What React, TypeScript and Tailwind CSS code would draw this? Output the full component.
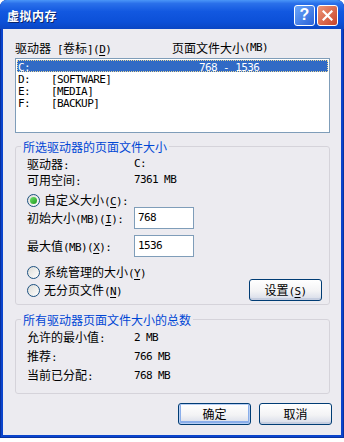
import React from "react";

function T({ s }: { s: string }) {
  const parts = s.match(/[\x00-\x7f]+|[^\x00-\x7f]+/g) ?? [];
  return (
    <>
      {parts.map((p, i) =>
        /^[\x00-\x7f]+$/.test(p) ? (
          <span key={i} className="font-['DejaVu_Sans_Mono',monospace] text-[11px] tracking-[-0.6px] whitespace-pre">
            {p}
          </span>
        ) : (
          <span key={i} className="font-['Noto_Sans_CJK_SC',sans-serif] text-[12px]">
            {p}
          </span>
        )
      )}
    </>
  );
}

function M({ pre, u, post }: { pre: string; u: string; post: string }) {
  return (
    <span className="whitespace-pre">
      <T s={pre} />
      <span className="underline underline-offset-2">
        <T s={u} />
      </span>
      <T s={post} />
    </span>
  );
}

function Radio({ checked }: { checked?: boolean }) {
  return (
    <span className="w-[13px] h-[13px] shrink-0 rounded-full border border-[#1C5180] bg-[linear-gradient(135deg,#DCDCD7,#FFFFFF)] flex items-center justify-center">
      {checked && (
        <span className="w-[7px] h-[7px] rounded-full bg-[linear-gradient(135deg,#6FE06B,#1E9A1E)]" />
      )}
    </span>
  );
}

function Btn({ children, def }: { children: React.ReactNode; def?: boolean }) {
  return (
    <div
      className={
        def
          ? "w-[73px] h-[22px] rounded-[3px] border border-[#003C74] bg-[linear-gradient(to_bottom,#FFFFFF_0%,#F3F3F5_55%,#D6DBE8_100%)] shadow-[inset_0_0_0_1px_#B8CFF4,inset_0_-1px_0_2px_#8AAEEA] flex items-center justify-center leading-[12px]"
          : "w-[73px] h-[22px] rounded-[3px] border border-[#003C74] bg-[linear-gradient(to_bottom,#FFFFFF_0%,#F3F3F5_55%,#D6DBE8_100%)] shadow-[inset_0_-2px_0_#C6CEE0] flex items-center justify-center leading-[12px]"
      }
    >
      {children}
    </div>
  );
}

function Field({ value }: { value: string }) {
  return (
    <div className="w-[60px] h-[22px] border border-[#7F9DB9] bg-white flex items-center pl-[3px] pb-[1px]">
      <T s={value} />
    </div>
  );
}

export default function App() {
  return (
    <div className="w-[344px] h-[442px] bg-white leading-[12px] text-black">
      <div className="w-[344px] h-[438px] flex flex-col rounded-t-[7px] overflow-hidden bg-[#0A44CC] shadow-[inset_1px_0_0_#0831A0,inset_-1px_0_0_#0831A0,inset_0_-1px_0_#0831A0]">
        {/* Title bar */}
        <div className="h-[29px] shrink-0 flex items-center justify-between pl-[7px] pr-[6px] bg-[linear-gradient(to_bottom,#4A96F8_0%,#2A70EA_12%,#1258E0_40%,#0C50D8_75%,#0A46C4_100%)]">
          <span className="pt-[2px] text-white font-bold font-['Noto_Sans_CJK_SC',sans-serif] text-[12px] tracking-[0.5px] [text-shadow:1px_1px_0_#0A246A]">
            虚拟内存
          </span>
          <div className="flex gap-[2px] pt-[1px]">
            <div className="w-[21px] h-[21px] rounded-[3px] border border-white bg-[linear-gradient(135deg,#6BA6FA,#2A62D8)] flex items-center justify-center text-white font-bold font-['Liberation_Sans',sans-serif] text-[16px] leading-none">
              ?
            </div>
            <div className="w-[21px] h-[21px] rounded-[3px] border border-white bg-[linear-gradient(135deg,#EE9678,#C8432A)] flex items-center justify-center">
              <svg width="11" height="11" viewBox="0 0 11 11">
                <path d="M1.5 1.5 L9.5 9.5 M9.5 1.5 L1.5 9.5" stroke="white" strokeWidth="2.2" strokeLinecap="square" />
              </svg>
            </div>
          </div>
        </div>

        {/* Body */}
        <div className="flex-1 mx-[3px] mb-[3px] bg-[#ECEBF0] flex flex-col pl-[12px] pr-[11px] pt-[13px]">
          <div className="h-[12px] flex items-center">
            <div className="w-[157px]">
              <M pre="驱动器 [卷标](" u="D" post=")" />
            </div>
            <T s="页面文件大小(MB)" />
          </div>

          <div className="mt-[4px] h-[75px] border border-[#7F9DB9] bg-white pt-[1px] px-[1px]">
            <div className="h-[12px] flex items-center bg-[#316AC5] text-white outline outline-1 outline-dotted -outline-offset-1 outline-[#E8D89A]">
              <div className="w-[34px] pl-[1px]"><T s="C:" /></div>
              <div className="w-[148px]" />
              <div><T s="768 - 1536" /></div>
            </div>
            {[
              ["D:", "[SOFTWARE]"],
              ["E:", "[MEDIA]"],
              ["F:", "[BACKUP]"],
            ].map(([d, l]) => (
              <div key={d} className="h-[12px] flex items-center">
                <div className="w-[34px] pl-[1px]"><T s={d} /></div>
                <div><T s={l} /></div>
              </div>
            ))}
          </div>

          {/* Group 1 */}
          <fieldset className="mt-[7px] border border-[#D5D3DA] rounded-[3px] pb-[3px]">
            <legend className="ml-[5px] px-[2px] h-[12px] leading-[12px] text-[#0046D5]">
              <T s="所选驱动器的页面文件大小" />
            </legend>
            <div className="pl-[11px] pr-[7px] flex flex-col">
              <div className="mt-[4px] h-[16px] flex items-center">
                <div className="w-[107px]"><T s="驱动器:" /></div>
                <T s="C:" />
              </div>
              <div className="h-[16px] flex items-center">
                <div className="w-[107px]"><T s="可用空间:" /></div>
                <T s="7361 MB" />
              </div>
              <div className="mt-[5px] h-[14px] flex items-center gap-[4px]">
                <Radio checked />
                <M pre="自定义大小(" u="C" post="):" />
              </div>
              <div className="h-[22px] flex items-center">
                <div className="w-[107px]"><M pre="初始大小(MB)(" u="I" post="):" /></div>
                <Field value="768" />
              </div>
              <div className="mt-[6px] h-[22px] flex items-center">
                <div className="w-[107px]"><M pre="最大值(MB)(" u="X" post="):" /></div>
                <Field value="1536" />
              </div>
              <div className="mt-[8px] h-[14px] flex items-center gap-[4px]">
                <Radio />
                <M pre="系统管理的大小(" u="Y" post=")" />
              </div>
              <div className="h-[22px] flex items-center justify-between">
                <div className="flex items-center gap-[4px]">
                  <Radio />
                  <M pre="无分页文件(" u="N" post=")" />
                </div>
                <Btn>
                  <M pre="设置(" u="S" post=")" />
                </Btn>
              </div>
            </div>
          </fieldset>

          {/* Group 2 */}
          <fieldset className="mt-[8px] border border-[#D5D3DA] rounded-[3px] pb-[8px]">
            <legend className="ml-[5px] px-[2px] h-[12px] leading-[12px] text-[#0046D5]">
              <T s="所有驱动器页面文件大小的总数" />
            </legend>
            <div className="pl-[11px] pt-[3px] flex flex-col">
              {[
                ["允许的最小值:", "2 MB"],
                ["推荐:", "766 MB"],
                ["当前已分配:", "768 MB"],
              ].map(([a, b]) => (
                <div key={a} className="h-[19px] flex items-center">
                  <div className="w-[107px]"><T s={a} /></div>
                  <T s={b} />
                </div>
              ))}
            </div>
          </fieldset>

          <div className="mt-[9px] flex justify-end gap-[8px] -mr-[2px]">
            <Btn def>
              <T s="确定" />
            </Btn>
            <Btn>
              <T s="取消" />
            </Btn>
          </div>
        </div>
      </div>
    </div>
  );
}
